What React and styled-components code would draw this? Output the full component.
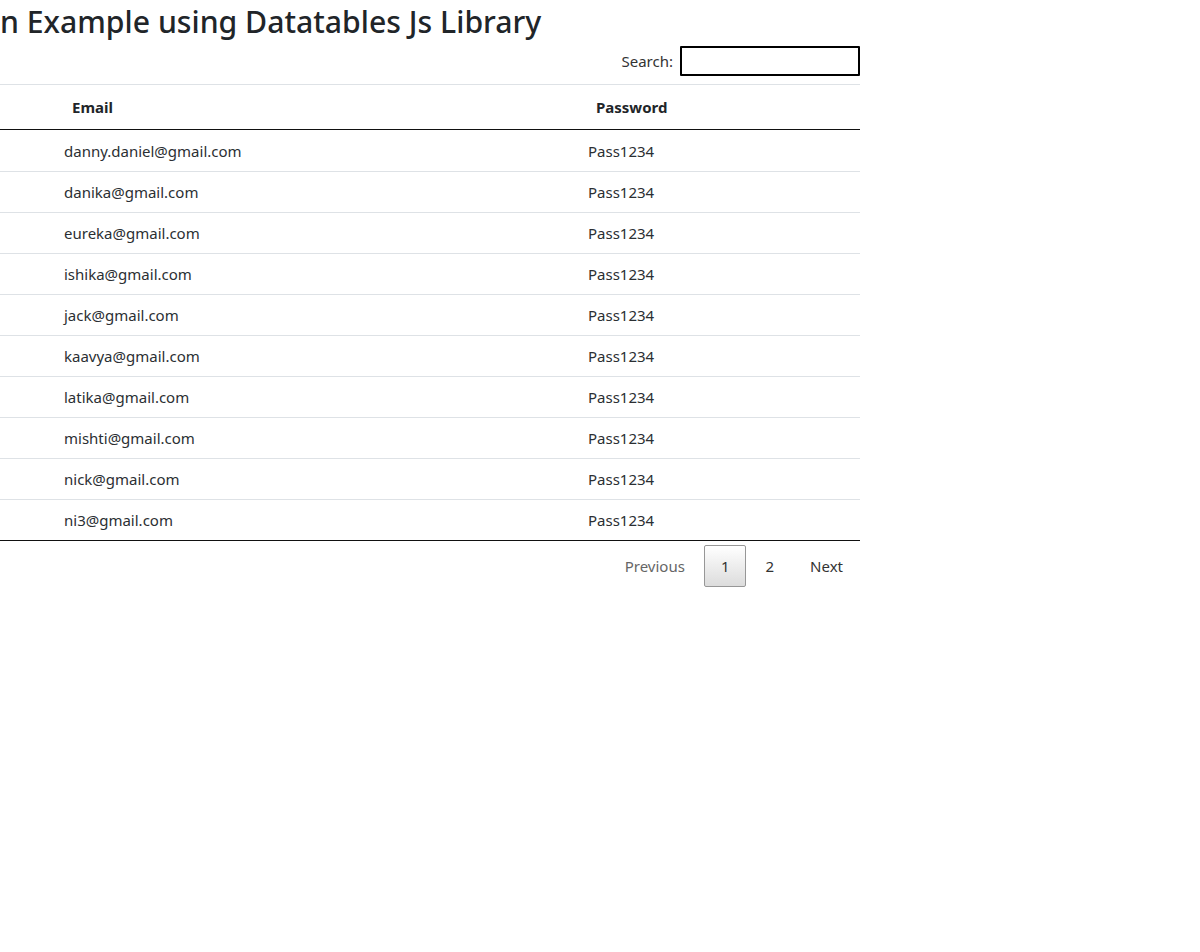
import React from "react";
import styled, { createGlobalStyle } from "styled-components";

const GlobalStyle = createGlobalStyle`
  html, body {
    margin: 0;
    padding: 0;
    background: #fff;
  }
  body {
    font-family: "Segoe UI", "Noto Sans", "Open Sans", sans-serif;
    font-size: 16px;
    line-height: 1.5;
    color: #212529;
  }
`;

const Page = styled.div`
  width: 860px;
  padding-top: 3px;
`;

const Title = styled.h2`
  margin: 0;
  font-size: 30.2px;
  line-height: 38px;
  font-weight: 500;
  color: #212529;
  white-space: nowrap;
`;

const Toolbar = styled.div`
  display: flex;
  justify-content: flex-end;
  align-items: center;
  margin-top: 5px;
  height: 30px;
  margin-bottom: 8px;
`;

const SearchLabel = styled.label`
  display: flex;
  align-items: center;
  color: #333;
  font-size: 15px;
  input {
    margin-left: 7px;
    width: 180px;
    height: 30px;
    box-sizing: border-box;
    border: 2px solid #000;
    border-radius: 1px;
    padding: 3px 5px;
    font: inherit;
    outline: none;
  }
`;

const Table = styled.table`
  width: 100%;
  table-layout: fixed;
  border-collapse: collapse;
  border-top: 1px solid #dee2e6;
  border-bottom: 1px solid #111;
`;

const Th = styled.th`
  text-align: left;
  font-weight: 700;
  font-size: 15px;
  padding: 10px 18px;
  height: 24px;
  border-bottom: 1px solid #111;
`;

const Row = styled.tr`
  td {
    padding: 8px 10px;
    height: 24px;
    font-size: 15px;
    color: #2b2f33;
    border-bottom: 1px solid #dee2e6;
  }
  &:first-child td {
    padding-top: 9px;
  }
  &:last-child td {
    border-bottom: none;
  }
`;

const Paging = styled.div`
  display: flex;
  justify-content: flex-end;
  padding-top: 4px;
`;

const PageButton = styled.span`
  box-sizing: border-box;
  min-width: 24px;
  padding: 8px 16px;
  margin-left: 2px;
  border: 1px solid ${(p) => (p.$current ? "#979797" : "transparent")};
  border-radius: 2px;
  font-size: 15px;
  line-height: 24px;
  text-align: center;
  color: ${(p) => (p.$disabled ? "#666" : "#333")};
  background: ${(p) =>
    p.$current ? "linear-gradient(to bottom, #fff 0%, #dcdcdc 100%)" : "transparent"};
  cursor: ${(p) => (p.$disabled ? "default" : "pointer")};
`;

const users = [
  "danny.daniel@gmail.com",
  "danika@gmail.com",
  "eureka@gmail.com",
  "ishika@gmail.com",
  "jack@gmail.com",
  "kaavya@gmail.com",
  "latika@gmail.com",
  "mishti@gmail.com",
  "nick@gmail.com",
  "ni3@gmail.com",
];

export default function App() {
  return (
    <>
      <GlobalStyle />
      <Page>
        <Title>n Example using Datatables Js Library</Title>
        <Toolbar>
          <SearchLabel>
            Search:
            <input type="search" />
          </SearchLabel>
        </Toolbar>
        <Table>
          <colgroup>
            <col style={{ width: 54 }} />
            <col style={{ width: 524 }} />
            <col style={{ width: 282 }} />
          </colgroup>
          <thead>
            <tr>
              <Th />
              <Th>Email</Th>
              <Th>Password</Th>
            </tr>
          </thead>
          <tbody>
            {users.map((email) => (
              <Row key={email}>
                <td />
                <td>{email}</td>
                <td>Pass1234</td>
              </Row>
            ))}
          </tbody>
        </Table>
        <Paging>
          <PageButton $disabled>Previous</PageButton>
          <PageButton $current>1</PageButton>
          <PageButton>2</PageButton>
          <PageButton>Next</PageButton>
        </Paging>
      </Page>
    </>
  );
}
